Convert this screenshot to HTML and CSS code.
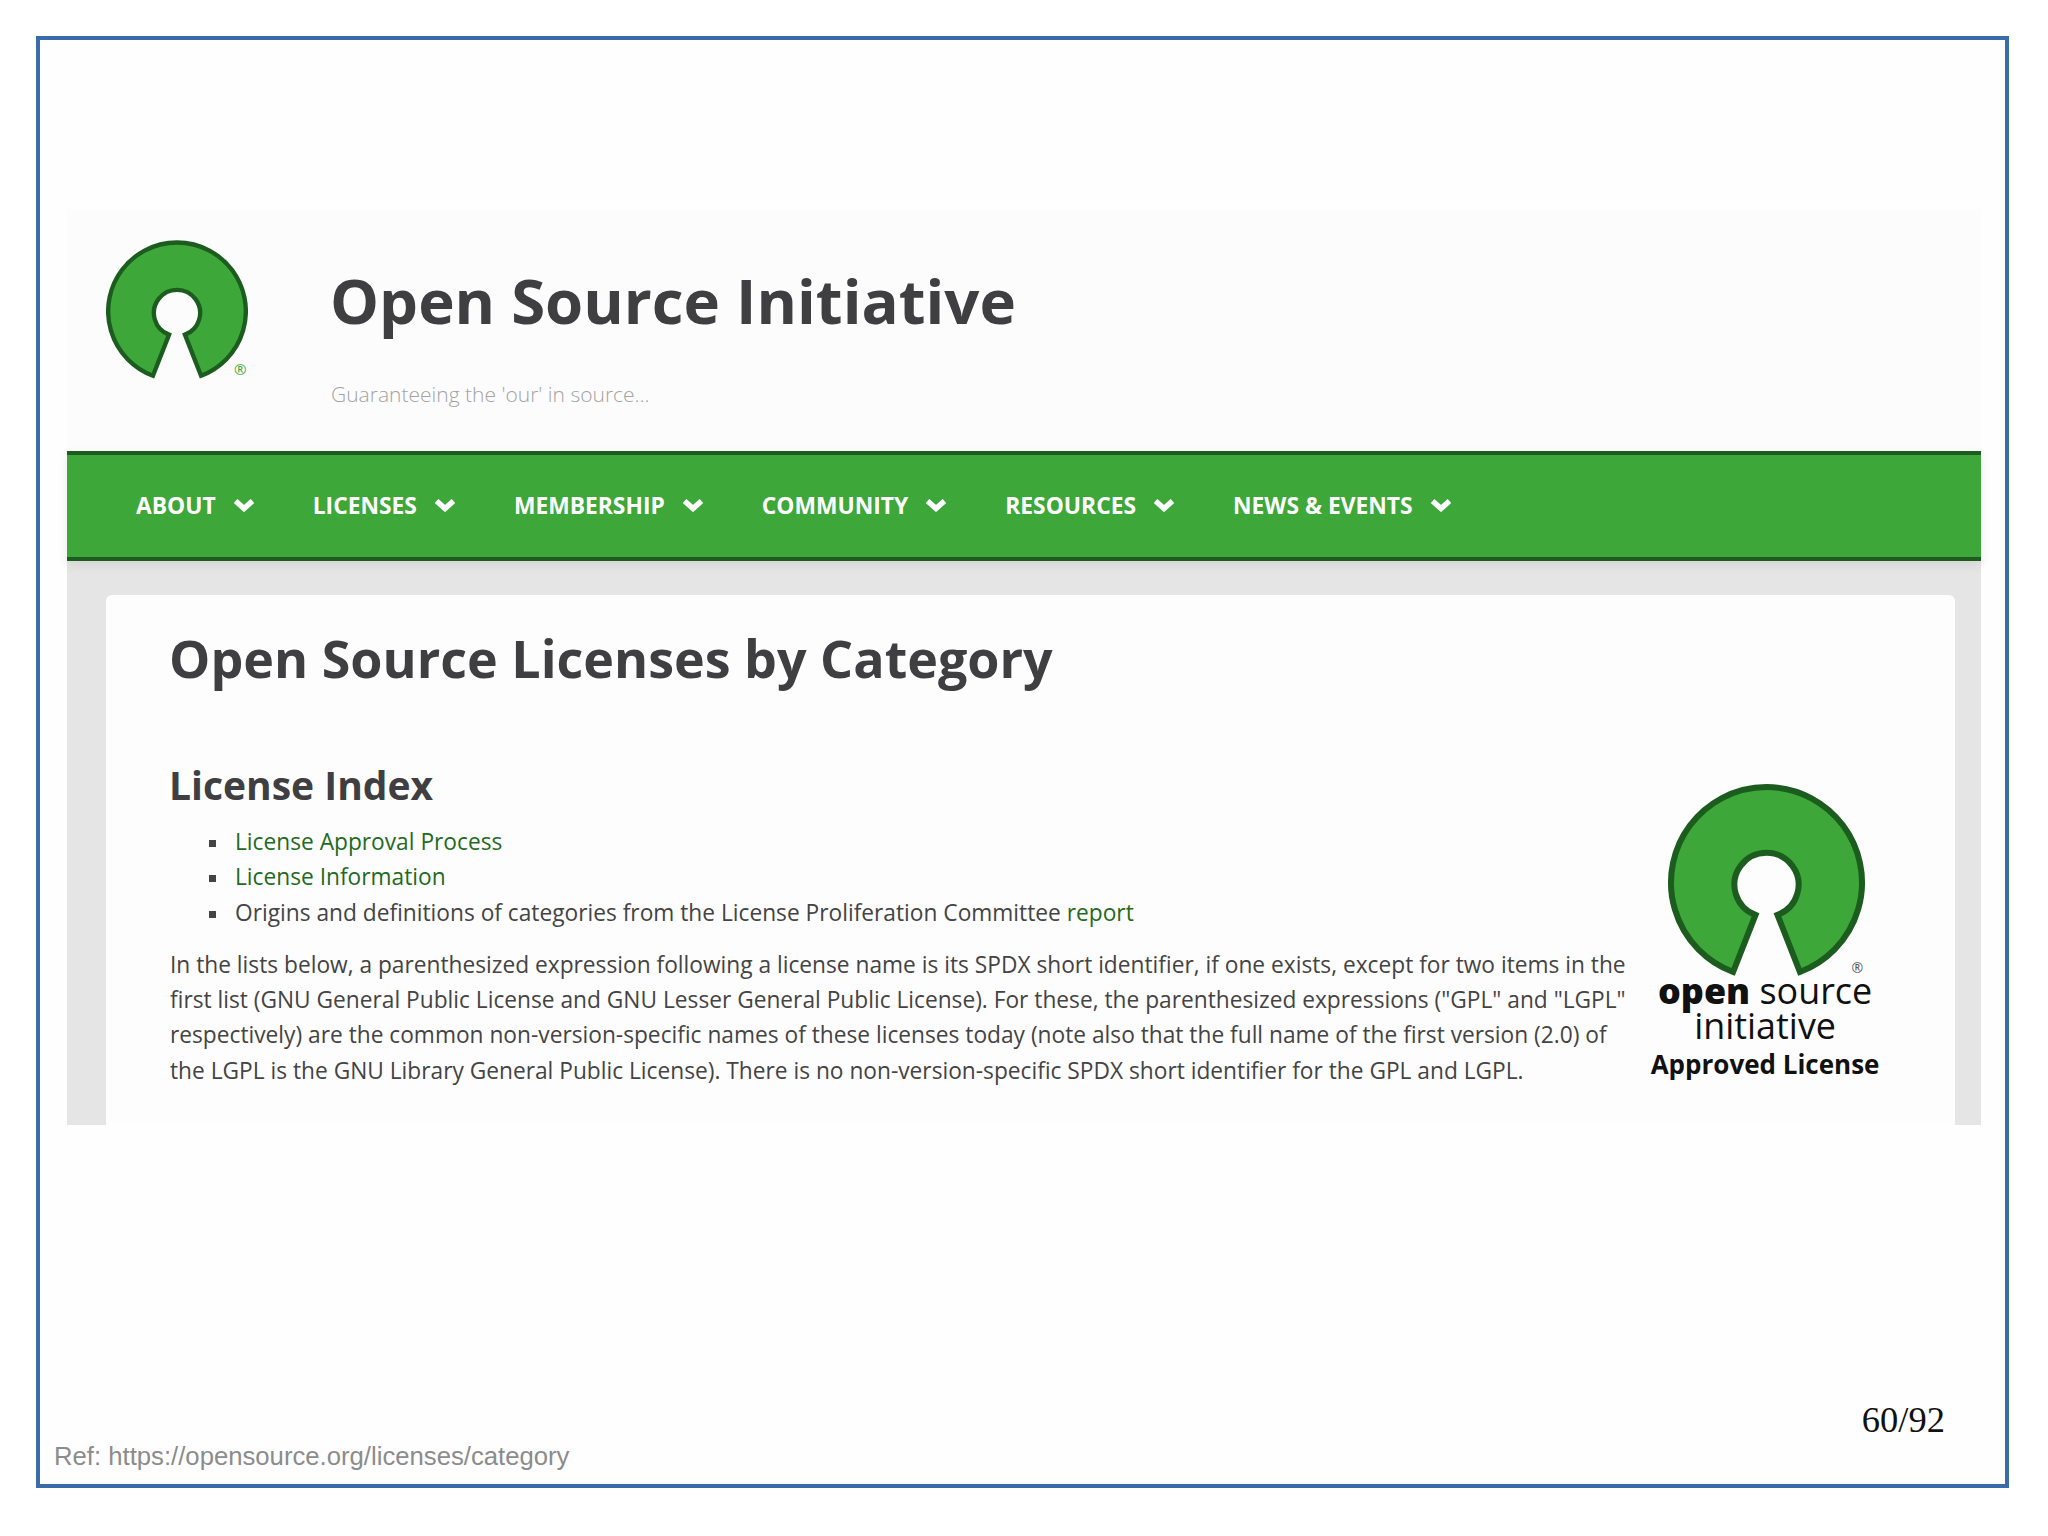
FILE: index.html
```html
<!DOCTYPE html>
<html lang="en">
<head>
  <meta charset="UTF-8">
  <title>Open Source Licenses by Category</title>
  <link rel="stylesheet" href="styles.css">
</head>
<body>
  <svg class="defs" width="0" height="0">
    <symbol id="osi-mark" viewBox="0 -7 590 575">
      <path d="M195 556 A286 286 0 1 1 395 556 L328 385 A96 96 0 1 0 262 385 Z" fill="#3da73a" stroke="#1c5c1e" stroke-width="18" stroke-linejoin="miter"/>
    </symbol>
    <symbol id="chevron" viewBox="0 0 20 14">
      <polyline points="1.5,3 10,10.5 18.5,3" fill="none" stroke="#fff" stroke-width="5.5"/>
    </symbol>
  </svg>

  <div class="slide">
    <div class="shot">
      <div class="site-header">
        <div class="site-logo">
          <svg class="site-mark"><use href="#osi-mark"/></svg>
          <span class="site-reg">®</span>
        </div>
        <div class="site-titles">
          <div class="site-title">Open Source Initiative</div>
          <div class="site-tagline">Guaranteeing the 'our' in source...</div>
        </div>
      </div>

      <div class="nav">
        <div class="nav-item">ABOUT <svg class="chev"><use href="#chevron"/></svg></div>
        <div class="nav-item">LICENSES <svg class="chev"><use href="#chevron"/></svg></div>
        <div class="nav-item">MEMBERSHIP <svg class="chev"><use href="#chevron"/></svg></div>
        <div class="nav-item">COMMUNITY <svg class="chev"><use href="#chevron"/></svg></div>
        <div class="nav-item">RESOURCES <svg class="chev"><use href="#chevron"/></svg></div>
        <div class="nav-item">NEWS &amp; EVENTS <svg class="chev"><use href="#chevron"/></svg></div>
      </div>

      <div class="main">
        <div class="card">
          <h1>Open Source Licenses by Category</h1>
          <div class="columns">
            <div class="text">
              <h2>License Index</h2>
              <ul>
                <li><a href="#">License Approval Process</a></li>
                <li><a href="#">License Information</a></li>
                <li>Origins and definitions of categories from the License Proliferation Committee <a href="#">report</a></li>
              </ul>
              <p>In the lists below, a parenthesized expression following a license name is its SPDX short identifier, if one exists, except for two items in the first list (GNU General Public License and GNU Lesser General Public License). For these, the parenthesized expressions ("GPL" and "LGPL" respectively) are the common non-version-specific names of these licenses today (note also that the full name of the first version (2.0) of the LGPL is the GNU Library General Public License). There is no non-version-specific SPDX short identifier for the GPL and LGPL.</p>
            </div>
            <div class="badge">
              <div class="badge-logo">
                <svg class="badge-mark"><use href="#osi-mark"/></svg>
                <span class="badge-reg">®</span>
              </div>
              <div class="badge-name"><b>open</b> source</div>
              <div class="badge-name">initiative</div>
              <div class="badge-approved">Approved License</div>
            </div>
          </div>
        </div>
      </div>
    </div>

    <div class="footer">
      <div class="ref">Ref: https://opensource.org/licenses/category</div>
      <div class="page-no">60/92</div>
    </div>
  </div>
</body>
</html>
```

FILE: styles.css
```css
* {
  margin: 0;
  padding: 0;
  box-sizing: border-box;
}

body {
  background-color: #fff;
  font-family: "Open Sans", sans-serif;
}

.defs {
  display: block;
  height: 0;
}

.slide {
  width: 1973px;
  height: 1452px;
  margin: 36px 0 0 36px;
  border: 4px solid #3a6bab;
  background-color: #fefefe;
  display: flex;
  flex-flow: column nowrap;
}

.shot {
  height: 916px;
  margin: 169px 24px 0 27px;
  display: flex;
  flex-flow: column nowrap;
  background-color: #e6e5e6;
}

.site-header {
  height: 242px;
  background-color: #fdfcfd;
  display: flex;
  flex-flow: row nowrap;
  padding: 31px 0 0 39px;
}
.site-logo {
  position: relative;
  width: 225px;
}
.site-mark {
  display: block;
  width: 142px;
  height: 139px;
}
.site-reg {
  position: absolute;
  left: 128px;
  top: 121px;
  font-size: 15px;
  line-height: 16px;
  color: #3da73a;
}
.site-title {
  font-size: 61.7px;
  line-height: 84px;
  font-weight: 700;
  color: #3f3f42;
  margin: 18px 0 0 -1px;
}
.site-tagline {
  font-size: 21px;
  line-height: 30px;
  font-weight: 300;
  color: #a3a3a3;
  margin-top: 37px;
}

.nav {
  height: 110px;
  background-color: #3da73a;
  border-top: 4px solid #1c5c1e;
  border-bottom: 4px solid #1c5c1e;
  box-shadow: 0 4px 10px rgba(0, 0, 0, 0.08);
  display: flex;
  flex-flow: row nowrap;
  align-items: center;
  padding: 0 0 2px 69px;
  gap: 59px;
}
.nav-item {
  display: flex;
  align-items: center;
  gap: 18px;
  color: #fff;
  font-size: 22.82px;
  font-weight: 700;
  white-space: nowrap;
}
.chev {
  display: block;
  width: 20px;
  height: 14px;
}

.main {
  flex: 1;
  padding: 34px 26px 0 39px;
  min-height: 0;
}
.card {
  height: 100%;
  background-color: #fefdfe;
  border-radius: 6px 6px 0 0;
  padding: 27px 70px 0 64px;
}
h1 {
  font-size: 52px;
  line-height: 72px;
  font-weight: 700;
  color: #3f3f42;
  margin-left: -1px;
}
.columns {
  display: flex;
  flex-flow: row nowrap;
  gap: 16px;
}
.text {
  width: 1460px;
  font-size: 22.72px;
  line-height: 35.3px;
  color: #444;
}
h2 {
  font-size: 39px;
  line-height: 54px;
  font-weight: 700;
  color: #3f3f42;
  margin: 64px 0 0 -1px;
}
ul {
  list-style: none;
  padding-left: 65px;
  margin-top: 12px;
}
li::before {
  content: "";
  display: inline-block;
  width: 7px;
  height: 7px;
  margin: 0 19px 0 -26px;
  vertical-align: 3px;
  background-color: #444;
}
a {
  color: #1f6b22;
  text-decoration: none;
}
p {
  margin-top: 17px;
}

.badge {
  width: 240px;
  margin-top: 90px;
  display: flex;
  flex-flow: column nowrap;
  align-items: center;
  color: #111;
}
.badge-logo {
  position: relative;
  width: 199px;
  height: 189px;
  margin-left: 3px;
}
.badge-mark {
  display: block;
  width: 199px;
  height: 192px;
}
.badge-reg {
  position: absolute;
  right: 3px;
  bottom: -3px;
  font-size: 14px;
  line-height: 16px;
  color: #555;
}
.badge-name {
  font-size: 35.9px;
  line-height: 35px;
  white-space: nowrap;
}
.badge-name b {
  font-weight: 800;
}
.badge-approved {
  font-size: 26px;
  line-height: 43px;
  font-weight: 700;
  white-space: nowrap;
}

.footer {
  flex: 1;
  display: flex;
  flex-flow: row nowrap;
  justify-content: space-between;
  align-items: flex-end;
  padding: 0 60px 10px 14px;
}
.ref {
  font-family: "Liberation Sans", sans-serif;
  font-size: 25.7px;
  line-height: 36px;
  color: #8c8c8c;
}
.page-no {
  font-family: "Liberation Serif", serif;
  font-size: 36.5px;
  line-height: 42px;
  color: #111;
  margin-bottom: 33px;
}
```
